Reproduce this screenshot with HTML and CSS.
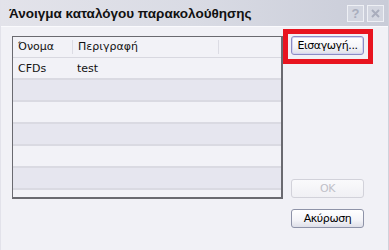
FILE: index.html
```html
<!DOCTYPE html>
<html>
<head>
<meta charset="utf-8">
<link rel="stylesheet" href="styles.css">
</head>
<body>
<div class="window">
  <div class="titlebar">
    <div class="title">Άνοιγμα καταλόγου παρακολούθησης</div>
    <div class="tbtns">
      <span class="tbtn">?</span>
      <span class="tbtn">
        <svg width="9" height="9" viewBox="0 0 9 9"><path d="M1 1L8 8M8 1L1 8" stroke="#a9adbd" stroke-width="2"/></svg>
      </span>
    </div>
  </div>
  <div class="content">
    <div class="list">
      <div class="head">
        <div class="c1">Όνομα</div>
        <div class="c2">Περιγραφή</div>
      </div>
      <div class="row light"><div class="c1">CFDs</div><div class="c2">test</div></div>
      <div class="row dark"></div>
      <div class="row light"></div>
      <div class="row dark"></div>
      <div class="row light"></div>
      <div class="row dark"></div>
      <div class="row light"></div>
    </div>
    <div class="side">
      <div class="mark">
        <button class="btn focus">Εισαγωγή...</button>
      </div>
      <div class="bottom">
        <button class="btn disabled">OK</button>
        <button class="btn">Ακύρωση</button>
      </div>
    </div>
  </div>
</div>
</body>
</html>
```
FILE: styles.css
```css
html, body {
  margin: 0;
  padding: 0;
}
body {
  width: 389px;
  height: 250px;
  overflow: hidden;
  font-family: "DejaVu Sans", sans-serif;
}
.window {
  width: 389px;
  height: 250px;
  background: #f1f1f6;
  display: flex;
  flex-direction: column;
  box-sizing: border-box;
  border-left: 1px solid #e2e2ea;
  border-right: 1px solid #d0d0da;
}
.titlebar {
  height: 26px;
  display: flex;
  align-items: center;
  justify-content: space-between;
  background: linear-gradient(to right, #e3e3ea 0%, #d9dbe4 50%, #c9ccd8 100%);
  border-bottom: 1px solid #fafafd;
  padding: 0 4px 0 8px;
}
.title {
  font-family: "Liberation Sans", Arial, sans-serif;
  font-weight: bold;
  font-size: 13.5px;
  color: #111;
}
.tbtns {
  display: flex;
  gap: 3px;
}
.tbtn {
  width: 17px;
  height: 17px;
  box-sizing: border-box;
  border: 1px solid #eef0f5;
  background: #d3d6e0;
  color: #a9adbd;
  font-family: "Liberation Sans", Arial, sans-serif;
  font-weight: bold;
  font-size: 13px;
  display: flex;
  align-items: center;
  justify-content: center;
}
.content {
  display: flex;
  padding: 9px 0 0 11px;
}
.list {
  width: 271px;
  height: 163px;
  box-sizing: border-box;
  border: 1px solid #6a6a70;
  border-right-width: 2px;
  border-bottom-width: 2px;
  overflow: hidden;
  font-size: 11px;
  color: #111;
}
.head, .row {
  display: flex;
  align-items: center;
}
.head {
  height: 20px;
  border-bottom: 1px solid #d8d8e0;
  background: #f2f2f7;
}
.head .c1 {
  border-right: 1px solid #dcdce4;
  height: 14px;
  line-height: 14px;
}
.head .c2 {
  width: 140px;
  border-right: 1px solid #dcdce4;
  height: 14px;
  line-height: 14px;
}
.c1 {
  width: 54px;
  padding-left: 5px;
}
.c2 {
  padding-left: 5px;
}
.row {
  height: 20px;
  border-bottom: 2px solid #dadae2;
}
.row.light { background: #f2f2f7; }
.row.dark { background: #e6e6ef; }
.side {
  display: flex;
  flex-direction: column;
  margin-left: 8px;
  width: 73px;
}
.mark {
  position: relative;
}
.mark::after {
  content: "";
  position: absolute;
  left: -8px;
  top: -7px;
  width: 90px;
  height: 35px;
  box-sizing: border-box;
  border: 5px solid #e8141f;
}
.btn {
  font-family: "DejaVu Sans", sans-serif;
  font-size: 11px;
  letter-spacing: -0.4px;
  width: 73px;
  height: 19px;
  padding: 0;
  color: #000;
  border: 1px solid #8e93a8;
  border-radius: 3px;
  background: linear-gradient(#ffffff, #f4f4f8 60%, #dedfe8);
  display: flex;
  align-items: center;
  justify-content: center;
}
.btn.focus {
  border-color: #8c8cc4;
  box-shadow: inset 0 0 0 1px #d4d4f2;
}
.btn.disabled {
  color: #c0c0c8;
  border-color: #d2d2da;
  background: linear-gradient(#fafafc, #f0f0f4);
}
.bottom {
  margin-top: 124px;
  display: flex;
  flex-direction: column;
  gap: 11px;
}
```
